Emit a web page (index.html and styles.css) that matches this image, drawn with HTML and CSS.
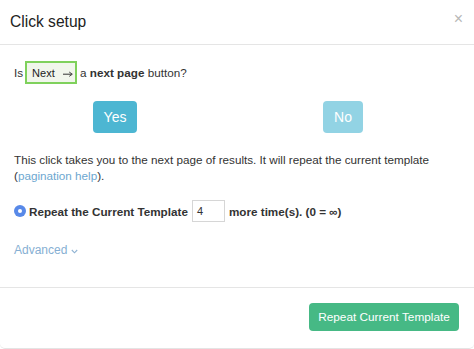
FILE: index.html
```html
<!DOCTYPE html>
<html>
<head>
<meta charset="utf-8">
<link rel="stylesheet" href="styles.css">
</head>
<body>
<div class="modal">
  <div class="header">
    <div class="title">Click setup</div>
    <div class="close">×</div>
  </div>
  <div class="content">
    <div class="question"><span>Is</span><span class="badge"><span>Next</span><svg class="arrow" width="10" height="6" viewBox="0 0 10 6"><path d="M0 3.2 H8.6" stroke="#333" stroke-width="1"/><path d="M6.2 1 L9.3 3.2 L6.2 5.4" fill="none" stroke="#333" stroke-width="0.9"/></svg></span><span>a <b>next page</b> button?</span></div>
    <div class="choices">
      <div class="choice"><button class="btn btn-yes">Yes</button></div>
      <div class="choice"><button class="btn btn-no">No</button></div>
    </div>
    <p class="info">This click takes you to the next page of results. It will repeat the current template (<a class="link">pagination help</a>).</p>
    <div class="repeat">
      <span class="radio"></span>
      <b>Repeat the Current Template</b>
      <span class="num">4</span>
      <b>more time(s). (0 = ∞)</b>
    </div>
    <div class="advanced"><span>Advanced</span><svg class="chev" width="7" height="5" viewBox="0 0 7 5"><path d="M0.8 1 L3.5 3.8 L6.2 1" fill="none" stroke="#8fb3d3" stroke-width="1.1"/></svg></div>
  </div>
  <div class="footer">
    <button class="btn-green">Repeat Current Template</button>
  </div>
</div>
</body>
</html>
```
FILE: styles.css
```css
* { box-sizing: border-box; }
html, body { margin: 0; padding: 0; background: #fff; }
body {
  font-family: "Liberation Sans", Arial, sans-serif;
  color: #333;
  font-size: 11.7px;
}
.modal {
  width: 474px;
  height: 349px;
  background: #fff;
  border-bottom: 1px solid #e4e4e4;
  border-radius: 0 0 5px 5px;
}
.header {
  height: 45px;
  border-bottom: 1px solid #e5e5e5;
  display: flex;
  align-items: center;
  justify-content: space-between;
  padding: 0 11px 1px 10px;
}
.title {
  font-size: 15.6px;
  color: #222;
}
.close {
  font-size: 16px;
  color: #b8b8b8;
  line-height: 1;
  margin-top: -5px;
}
.content {
  padding: 16px 14px 0 14px;
}
.question {
  display: flex;
  align-items: center;
  height: 23px;
  gap: 3px;
}
.badge {
  display: inline-flex;
  align-items: center;
  height: 23px;
  width: 52px;
  padding: 0 0 0 5px;
  margin-left: -1px;
  border: 2px solid #7fd15c;
  background: #f1f6ec;
  font-size: 11px;
  color: #222;
}
.arrow { margin-left: 8px; margin-top: 2px; }
.choices {
  display: grid;
  grid-template-columns: 228px 228px;
  margin: 17px 0 0 -13px;
}
.choice { display: flex; justify-content: center; }
.btn {
  height: 32px;
  border: none;
  border-radius: 4px;
  color: #fff;
  font-family: "Liberation Sans", Arial, sans-serif;
  font-size: 14px;
  padding: 0;
}
.btn-yes { width: 44px; background: #4db6d2; }
.btn-no { width: 40px; background: #92d3e4; }
.info {
  margin: 19px 0 0 0;
  line-height: 16px;
}
.link { color: #6da7d0; }
.repeat {
  display: flex;
  align-items: center;
  margin-top: 16px;
  height: 22px;
}
.radio {
  width: 12px;
  height: 12px;
  border-radius: 50%;
  background: #5889e8;
  position: relative;
  margin-right: 3px;
  display: inline-block;
}
.radio::after {
  content: "";
  position: absolute;
  left: 4px;
  top: 4px;
  width: 4px;
  height: 4px;
  border-radius: 50%;
  background: #fff;
}
.num {
  display: inline-block;
  width: 33px;
  height: 22px;
  border: 1px solid #d6d6d6;
  margin: 0 4px 0 4px;
  padding: 4px 0 0 4px;
  font-size: 11px;
}
.advanced {
  margin-top: 21px;
  color: #86afd3;
  font-size: 12px;
  display: flex;
  align-items: center;
}
.chev { margin-left: 4px; margin-top: 2px; }
.footer {
  margin-top: 30px;
  border-top: 1px solid #e5e5e5;
  display: flex;
  justify-content: flex-end;
  padding: 15px 15px 0 0;
}
.btn-green {
  width: 150px;
  height: 28px;
  border: none;
  border-radius: 4px;
  background: #46b985;
  color: #fff;
  font-family: "Liberation Sans", Arial, sans-serif;
  font-size: 11.8px;
  padding: 0;
}
```
